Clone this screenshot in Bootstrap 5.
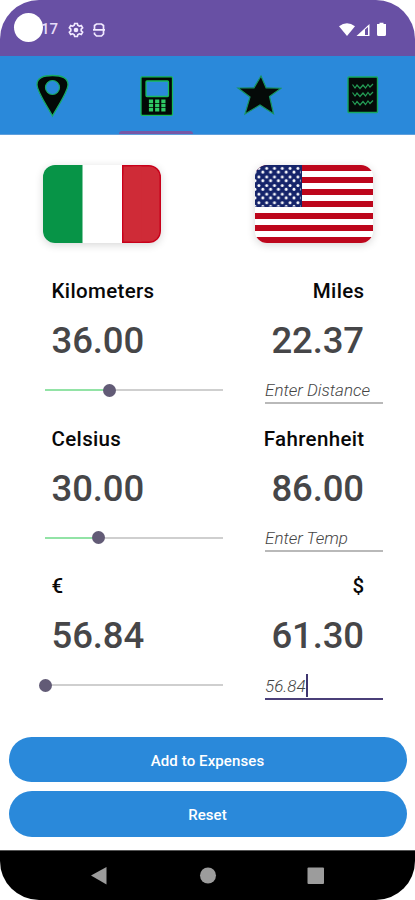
<!DOCTYPE html>
<html lang="en">
<head>
<meta charset="utf-8">
<meta name="viewport" content="width=device-width, initial-scale=1">
<title>Travel converter</title>
<link href="https://cdn.jsdelivr.net/npm/bootstrap@5.3.0/dist/css/bootstrap.min.css" rel="stylesheet">
<style>
body{font-family:Roboto,"Liberation Sans",sans-serif;background:#fff;color:#111}
svg{display:block;flex:none}
.phone{width:415px;height:900px;border-radius:39px;background:#fff}
.status{height:56px;background:#6850a4;padding:3px 28px 0 14px}
.cam{width:29px;height:29px;border-radius:50%;background:#fff;margin-top:-4px}
.clock{font-size:15px;font-weight:500;margin-left:-2px;color:#e6dcf8;width:17px}
.tabs{height:78.5px;background:#2a89da;border-bottom:1px solid #5f9fdc}
.tab-item{width:103.75px;padding-top:16px}
.tab-line{height:2.5px;width:74px;background:#7657a6;margin-top:auto;border-radius:3px 3px 0 0}
.flags{padding:30.5px 42px 0 43px;height:137.5px}
.flag{width:118px;height:78px;border-radius:12px;overflow:hidden;box-shadow:0 2px 8px rgba(0,0,0,.16)}
.group{height:147.6px;padding:0 32px 0 45px}
.unit{font-size:20.5px;font-weight:500;line-height:24px;height:38px;padding:7px 18.5px 0 6.5px;letter-spacing:.35px;color:#080808}
.val{font-size:36.5px;font-weight:500;line-height:44px;height:57px;padding:9px 19px 0 6.5px;color:#464648;letter-spacing:-.1px}
.track{width:178px;height:2px;background:#cfcfcf;margin-top:22px}
.fill{height:2px;background:#92e3a6}
.knob{width:13px;height:13px;border-radius:50%;background:#625b76;margin-left:-6.5px}
.entry{width:118px;height:37px;border-bottom:2px solid #b9b9b9;font-size:17px;font-style:italic;font-weight:300;color:#444;padding-top:11px;line-height:24px;white-space:nowrap}
.entry.live{border-bottom:2px solid #4a3f78;height:38px}
.caret{width:2px;height:23px;background:#3f3670}
.actions{padding:22px 8.5px 0;gap:9px}
.act{height:45.5px;border-radius:23px;background:#2a89da;color:#fff;font-size:15px;font-weight:500;padding:3px 0 0;border:0;letter-spacing:.1px}
.sysnav{height:50px;background:#000;border-top:1px solid #555}
</style>
</head>
<body>
<main class="phone d-flex flex-column overflow-hidden">
<header class="status d-flex align-items-center flex-shrink-0">
  <div class="cam flex-shrink-0"></div><span class="clock">17</span>
  <svg style="margin-left:10px" width="16" height="16" viewBox="0 0 16 16"><path d="M6.700 1.500h2.600l.5 1.800 1.500.9 2-.6 1.300 2.300L13.200 7.200v1.600l1.400 1.300-1.300 2.300-2-.6-1.500.9-.5 1.800H6.700l-.5-1.800-1.500-.9-2 .6-1.300-2.300L2.800 8.800V7.200L1.400 5.900l1.300-2.300 2 .6 1.500-.9z" fill="none" stroke="#f1e9ff" stroke-width="1.700"/><circle cx="8" cy="8" r="2.300" fill="#f1e9ff"/></svg>
  <svg style="margin-left:8px" width="14" height="16" viewBox="0 0 14 16" fill="none" stroke="#f1e9ff" stroke-width="1.700"><path d="M11.500 7.800V3.500L9.500 2h-5L2.500 3.500v4.300M1 7.800h12M11.500 8v4L9.500 14h-5l-2-2v-1.500"/></svg>
  <svg class="ms-auto" width="48" height="16" viewBox="0 0 48 16"><path d="M0 4.200Q8 -1.600 16 4.200L8 14z" fill="#fff"/><path d="M30.500 2v12H17.500z" fill="#fff"/><path d="M26 7.500 29 5v8h-3z" fill="#6850a4"/><path d="M38 2h2.500V.8h4V2H47v10.500q0 1.500-1.500 1.500h-6q-1.500 0-1.500-1.500z" fill="#fff"/></svg>
</header>
<nav class="tabs d-flex flex-shrink-0">
  <div class="tab-item d-flex flex-column align-items-center"><svg width="34" height="46" viewBox="0 0 34 46"><path d="M17.500 44C14 37 2 20 2 12.500 2 6 8 3.500 17.500 3.500S33 6 33 12.500C33 20 21 37 17.500 44z" fill="#030806" stroke="#18aa63" stroke-width="1.300"/><circle cx="17.500" cy="15.500" r="7" fill="#2a89da" stroke="#18aa63" stroke-width="1.200"/></svg></div>
  <div class="tab-item d-flex flex-column align-items-center"><svg width="36" height="46" viewBox="0 0 36 46"><rect x="3" y="4.800" width="31.500" height="38.500" rx="1" fill="#030806" stroke="#18bb59" stroke-width="1.300"/><rect x="8" y="9" width="22.500" height="15.500" rx="1" fill="#2a89da" stroke="#18bb59" stroke-width="1.300"/><path d="M13 27.500v12.300M19.200 27.500v12.300M25.400 27.500v12.300" stroke="#2fc965" stroke-width="4.200" stroke-dasharray="3.500 .8"/></svg><div class="tab-line"></div></div>
  <div class="tab-item d-flex flex-column align-items-center"><svg width="46" height="46" viewBox="0 0 46 46"><path d="M25 4 30.100 15.800 45 16.200 33.500 24.500 37.500 41.800 24 33 9 42 14 25 2 16 18 15.800z" fill="#050a08" stroke="#16945f" stroke-width="1.200"/></svg></div>
  <div class="tab-item d-flex flex-column align-items-center"><svg width="34" height="46" viewBox="0 0 34 46"><rect x="2" y="5" width="29.500" height="35.500" rx="1" fill="#050a08" stroke="#16a960" stroke-width="1.400"/><g fill="none" stroke="#249c55" stroke-width="1.200"><path d="m6.500 12.500 2.500 3.500 2-3 3 3.500 3-3.500 2.500 3 2.500-3.500 2 2.500 3-3"/><path d="m6.500 20.500 2.500 3.500 2-3 3 3.500 3-3.500 2.500 3 2.500-3.500 2 2.500 3-3"/><path d="m6.500 29 2.500 3.500 2-3 3 3.500 3-3.500 2.500 3 2.500-3.500 2 2.500 3-3"/></g></svg></div>
</nav>
<section class="flags d-flex justify-content-between flex-shrink-0">
  <div class="flag"><svg width="118" height="78"><rect width="118" height="78" fill="#fff"/><rect width="39.500" height="78" fill="#079447"/><rect x="79" width="39" height="78" fill="#c8001a"/><rect x="80.500" y="1.500" width="36" height="75" rx="10" fill="#cf2b37"/><rect x="80.500" y="1.500" width="18" height="75" fill="#cf2b37"/></svg></div>
  <div class="flag"><svg width="118" height="78"><defs><pattern id="stars" width="7.800" height="8.600" patternUnits="userSpaceOnUse"><circle cx="3.900" cy="3.300" r="1.500" fill="#fff"/><circle cx="0" cy="7.100" r="1.500" fill="#fff"/><circle cx="7.800" cy="7.100" r="1.500" fill="#fff"/></pattern></defs><rect width="118" height="78" fill="#fff"/><path d="M0 3h118M0 15h118M0 27h118M0 39h118M0 51h118M0 63h118M0 75h118" stroke="#bd061c" stroke-width="6"/><rect width="47" height="42" fill="#15246a"/><rect width="46" height="41.500" fill="url(#stars)"/></svg></div>
</section>
<section class="group d-flex justify-content-between flex-shrink-0">
  <div><div class="unit">Kilometers</div><div class="val">36.00</div><div class="track d-flex align-items-center"><div class="fill" style="width:36%"></div><div class="knob"></div></div></div>
  <div class="d-flex flex-column align-items-end"><div class="unit">Miles</div><div class="val">22.37</div><div class="entry">Enter Distance</div></div>
</section>
<section class="group d-flex justify-content-between flex-shrink-0">
  <div><div class="unit">Celsius</div><div class="val">30.00</div><div class="track d-flex align-items-center"><div class="fill" style="width:30%"></div><div class="knob"></div></div></div>
  <div class="d-flex flex-column align-items-end"><div class="unit">Fahrenheit</div><div class="val">86.00</div><div class="entry">Enter Temp</div></div>
</section>
<section class="group d-flex justify-content-between flex-shrink-0">
  <div><div class="unit">€</div><div class="val">56.84</div><div class="track d-flex align-items-center"><div class="fill" style="width:0%"></div><div class="knob"></div></div></div>
  <div class="d-flex flex-column align-items-end"><div class="unit">$</div><div class="val">61.30</div><div class="entry live d-flex align-items-center">56.84<span class="caret"></span></div></div>
</section>
<div class="actions d-flex flex-column flex-shrink-0"><button class="btn act">Add to Expenses</button><button class="btn act">Reset</button></div>
<footer class="sysnav d-flex align-items-center justify-content-center mt-auto flex-shrink-0">
  <svg width="234" height="18" viewBox="0 0 234 18" fill="#9c9c9c"><path d="M0 8.500 15.500 0v17.500z"/><circle cx="117" cy="8.500" r="8"/><rect x="216.500" y=".5" width="16.500" height="16.500" rx="1"/></svg>
</footer>
</main>
<script src="https://cdn.jsdelivr.net/npm/bootstrap@5.3.0/dist/js/bootstrap.bundle.min.js"></script>
</body>
</html>
